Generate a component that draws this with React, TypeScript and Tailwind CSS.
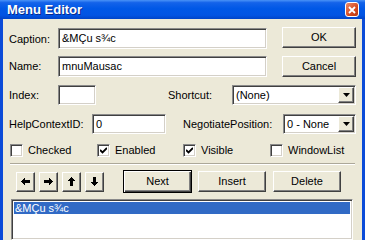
import React from "react";

const sunken =
  "bg-white border border-t-[#8a8a8a] border-l-[#8a8a8a] border-b-white border-r-white shadow-[inset_1px_1px_0_#404040,inset_-1px_-1px_0_#d4d0c8]";
const raised =
  "bg-[#ece9d8] border border-t-white border-l-white border-b-[#404040] border-r-[#404040] shadow-[inset_-1px_-1px_0_#808080]";

function Field({ w, h = "h-[21px]", value }: { w: string; h?: string; value?: string }) {
  return (
    <div className={`${sunken} ${w} ${h} flex items-center pl-[3px] text-[11px] text-black`}>
      {value}
    </div>
  );
}

function Button({ w, label, isDefault }: { w: string; label: string; isDefault?: boolean }) {
  if (isDefault) {
    return (
      <div className={`${w} h-[23px] border border-black bg-[#ece9d8] shadow-[inset_1px_1px_0_#fff,inset_-1px_-1px_0_#404040,inset_-2px_-2px_0_#808080] flex items-center justify-center text-[11px]`}>
        {label}
      </div>
    );
  }
  return (
    <div className={`${raised} ${w} h-[21px] flex items-center justify-center text-[11px]`}>
      {label}
    </div>
  );
}

function Select({ w, value }: { w: string; value: string }) {
  return (
    <div className={`${sunken} ${w} h-[20px] flex items-center p-[1px] text-[11px]`}>
      <span className="flex-1 pl-[2px]">{value}</span>
      <div className={`${raised} w-[16px] h-full flex items-center justify-center`}>
        <svg width="7" height="4" viewBox="0 0 7 4">
          <path d="M0 0H7L3.5 4Z" fill="#000" />
        </svg>
      </div>
    </div>
  );
}

function Check({ checked, label }: { checked?: boolean; label: string }) {
  return (
    <div className="flex items-center gap-[5px] text-[11px]">
      <div className={`${sunken} w-[13px] h-[13px] flex items-center justify-center`}>
        {checked && (
          <svg width="7" height="7" viewBox="0 0 7 7">
            <path d="M0 3 L2.5 5.5 L7 1" stroke="#000" strokeWidth="1.8" fill="none" />
          </svg>
        )}
      </div>
      <span>{label}</span>
    </div>
  );
}

function ArrowButton({ d }: { d: string }) {
  return (
    <div className={`${raised} w-[19px] h-[20px] flex items-center justify-center`}>
      <svg width="9" height="9" viewBox="0 0 9 9" shapeRendering="crispEdges">
        <path d={d} fill="#000" />
      </svg>
    </div>
  );
}

export default function App() {
  return (
    <div className="w-[365px] h-[240px] overflow-hidden bg-[#0b4bd8] flex flex-col font-['Liberation_Sans',Arial,sans-serif] text-black">
      {/* title bar */}
      <div className="h-[19px] shrink-0 flex items-center justify-between pl-[7px] pr-[6px] bg-[linear-gradient(to_bottom,#4a93f7_0%,#1463ea_14%,#0058e6_45%,#0254e3_80%,#0044c8_100%)]">
        <span className="text-white font-bold text-[13px] leading-none [text-shadow:1px_1px_0_#0a2a8c]">
          Menu Editor
        </span>
        <div className="w-[14px] h-[15px] rounded-[3px] border border-white bg-[linear-gradient(135deg,#ee8a6a,#d54a20_60%,#b8360e)] flex items-center justify-center">
          <svg width="8" height="8" viewBox="0 0 8 8">
            <path d="M1 1L7 7M7 1L1 7" stroke="#fff" strokeWidth="1.8" />
          </svg>
        </div>
      </div>

      {/* client area */}
      <div className="flex-1 mx-[3px] bg-[#ece9d8] flex flex-col pl-[6px] pr-[6px] text-[11px]">
        <div className="flex items-start mt-[8px]">
          <span className="w-[49px] mt-[4px]">Caption:</span>
          <div className="mt-[1px]">
            <Field w="w-[209px]" value="&MÇu s¾c" />
          </div>
          <div className="ml-[15px]">
            <Button w="w-[74px]" label="OK" />
          </div>
        </div>

        <div className="flex items-center mt-[7px]">
          <span className="w-[49px]">Name:</span>
          <Field w="w-[209px]" value="mnuMausac" />
          <div className="ml-[15px]">
            <Button w="w-[74px]" label="Cancel" />
          </div>
        </div>

        <div className="flex items-center mt-[8px]">
          <span className="w-[49px]">Index:</span>
          <Field w="w-[38px]" h="h-[20px]" />
          <span className="ml-[72px] w-[64px]">Shortcut:</span>
          <Select w="w-[124px]" value="(None)" />
        </div>

        <div className="flex items-center mt-[9px]">
          <span className="w-[83px]">HelpContextID:</span>
          <Field w="w-[74px]" h="h-[20px]" value="0" />
          <span className="ml-[17px] w-[100px]">NegotiatePosition:</span>
          <Select w="w-[73px]" value="0 - None" />
        </div>

        <div className="flex items-center mt-[9px] h-[14px]">
          <div className="w-[88px] pl-[1px]">
            <Check label="Checked" />
          </div>
          <div className="w-[86px]">
            <Check checked label="Enabled" />
          </div>
          <div className="w-[87px]">
            <Check checked label="Visible" />
          </div>
          <Check label="WindowList" />
        </div>

        <div className="mt-[6px] ml-[1px] mr-[1px] border-t border-t-[#aca899] border-b border-b-white" />

        <div className="flex items-center mt-[5px] pl-[7px]">
          <div className="flex gap-[4px]">
            <ArrowButton d="M0 4.5L4 0.5V3H9V6H4V8.5Z" />
            <ArrowButton d="M9 4.5L5 0.5V3H0V6H5V8.5Z" />
            <ArrowButton d="M4.5 0L8.5 4H6V9H3V4H0.5Z" />
            <ArrowButton d="M4.5 9L8.5 5H6V0H3V5H0.5Z" />
          </div>
          <div className="ml-[19px]">
            <Button w="w-[69px]" label="Next" isDefault />
          </div>
          <div className="ml-[6px]">
            <Button w="w-[68px]" label="Insert" />
          </div>
          <div className="ml-[7px]">
            <Button w="w-[68px]" label="Delete" />
          </div>
        </div>

        <div className={`${sunken} mt-[6px] ml-[2px] w-[342px] flex-1 p-[2px]`}>
          <div className="h-[12px] bg-[#316ac5] text-white text-[11px] leading-[12px] pl-[1px]">
            &amp;MÇu s¾c
          </div>
        </div>
      </div>
    </div>
  );
}
